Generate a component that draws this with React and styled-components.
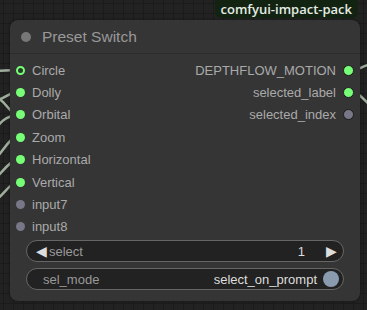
import React from 'react';
import styled, { createGlobalStyle } from 'styled-components';

const GlobalStyle = createGlobalStyle`
  html, body {
    margin: 0;
    padding: 0;
    background: #222;
  }
  body {
    font-family: "Liberation Sans", Arial, sans-serif;
  }
`;

const inputs = [
  { name: 'Circle', linked: true, ring: true },
  { name: 'Dolly', linked: true },
  { name: 'Orbital', linked: true },
  { name: 'Zoom', linked: true },
  { name: 'Horizontal', linked: true },
  { name: 'Vertical', linked: true },
  { name: 'input7', linked: false },
  { name: 'input8', linked: false },
];

const outputs = [
  { name: 'DEPTHFLOW_MOTION', linked: true },
  { name: 'selected_label', linked: true },
  { name: 'selected_index', linked: false },
];

const App = () => {
  return (
    <>
      <GlobalStyle />
      <Canvas>
        <Wires width="367" height="310" viewBox="0 0 367 310">
          <g fill="none" stroke="#9fae9c" strokeWidth="2.5" strokeLinecap="round">
            <path d="M-4 71 L16 70" />
            <path d="M-4 101 C4 98 8 94 16 92" />
            <path d="M-4 97 C4 100 8 110 16 115" />
            <path d="M-4 128 C4 118 8 117 16 115" />
            <path d="M-4 158 C4 150 8 140 16 137" />
            <path d="M-4 178 C4 170 8 163 16 160" />
            <path d="M-4 200 C4 194 8 186 16 182" />
            <path d="M354 70 C360 69 363 66 371 64" />
            <path d="M354 92 C360 94 364 100 371 106" />
          </g>
        </Wires>
        <Badge>comfyui-impact-pack</Badge>
        <Node>
          <Title>
            <TitleDot />
            <TitleText>Preset Switch</TitleText>
          </Title>
          <Body>
            <Slots>
              <SlotColumn>
                {inputs.map(input => (
                  <SlotRow key={input.name}>
                    <SlotDot $linked={input.linked} $ring={input.ring} />
                    <SlotLabel>{input.name}</SlotLabel>
                  </SlotRow>
                ))}
              </SlotColumn>
              <SlotColumn>
                {outputs.map(output => (
                  <SlotRow key={output.name} $right>
                    <SlotLabel>{output.name}</SlotLabel>
                    <SlotDot $linked={output.linked} $output />
                  </SlotRow>
                ))}
              </SlotColumn>
            </Slots>
            <Widget>
              <Arrow>◀</Arrow>
              <WidgetLabel>select</WidgetLabel>
              <WidgetValue>1</WidgetValue>
              <Arrow $right>▶</Arrow>
            </Widget>
            <Widget $toggle>
              <WidgetLabel>sel_mode</WidgetLabel>
              <WidgetValue>select_on_prompt</WidgetValue>
              <Knob />
            </Widget>
          </Body>
        </Node>
      </Canvas>
    </>
  );
};

const Canvas = styled.div`
  position: relative;
  width: 367px;
  height: 310px;
  overflow: hidden;
  background-color: #222;
  background-image: linear-gradient(#1b1b1b 1px, transparent 1px),
    linear-gradient(90deg, #1b1b1b 1px, transparent 1px);
  background-size: 10px 10px;
  background-position: 3px 3px;
  padding: 20px 7px 0 10px;
  box-sizing: border-box;
`;

const Wires = styled.svg`
  position: absolute;
  left: 0;
  top: 0;
`;

const Badge = styled.div`
  position: absolute;
  top: 0;
  right: 9px;
  height: 18px;
  padding: 0 6px;
  display: flex;
  align-items: center;
  background: #122312;
  border-radius: 0 0 6px 6px;
  color: #e4ece4;
  font-family: "Open Sans", "Noto Sans", sans-serif;
  font-size: 13px;
  font-weight: 600;
  line-height: 1;
`;

const Node = styled.div`
  position: relative;
  width: 350px;
  height: 281px;
  background: #353535;
  border-radius: 8px;
  box-shadow: 0 0 3px rgba(0, 0, 0, 0.5);
  display: flex;
  flex-direction: column;
`;

const Title = styled.div`
  height: 34px;
  display: flex;
  align-items: center;
  gap: 11px;
  padding: 1px 0 0 11px;
  border-bottom: 1px solid #2c2c2c;
  box-sizing: border-box;
`;

const TitleDot = styled.span`
  width: 10px;
  height: 10px;
  border-radius: 50%;
  background: #777;
`;

const TitleText = styled.span`
  color: #999;
  font-size: 15.5px;
`;

const Body = styled.div`
  padding: 5px 0 0;
  display: flex;
  flex-direction: column;
`;

const Slots = styled.div`
  display: flex;
  justify-content: space-between;
`;

const SlotColumn = styled.div`
  display: flex;
  flex-direction: column;
`;

const SlotRow = styled.div`
  height: 22.4px;
  display: flex;
  align-items: center;
  gap: 7px;
  padding: ${props => (props.$right ? '0 6px 0 0' : '0 0 0 6px')};
  justify-content: ${props => (props.$right ? 'flex-end' : 'flex-start')};
`;

const SlotDot = styled.span`
  width: 9px;
  height: 9px;
  border-radius: 50%;
  box-sizing: border-box;
  flex-shrink: 0;
  background: ${props => (props.$linked ? '#7f7' : '#778')};
  border: ${props =>
    props.$ring
      ? '2.5px solid #7f7'
      : props.$output
      ? '1px solid #1c1c1c'
      : 'none'};
  ${props => props.$ring && 'background: #2a3a2a;'}
  ${props => props.$output && 'width: 11px; height: 11px;'}
`;

const SlotLabel = styled.span`
  color: #aaa;
  font-size: 13px;
`;

const Widget = styled.div`
  margin: ${props => (props.$toggle ? '6px 16px 0 16px' : '2px 16px 0 16px')};
  height: 22px;
  box-sizing: border-box;
  border: 1px solid #666;
  border-radius: 11px;
  background: #222;
  display: flex;
  align-items: center;
  padding: ${props => (props.$toggle ? '0 4px 0 16px' : '0 6px 0 9px')};
  gap: ${props => (props.$toggle ? '4px' : '2px')};
  font-size: 13px;
`;

const Arrow = styled.span`
  color: #ddd;
  font-size: 14px;
  line-height: 1;
  margin-left: ${props => (props.$right ? '19px' : '0')};
`;

const WidgetLabel = styled.span`
  color: #999;
  flex: 1;
`;

const WidgetValue = styled.span`
  color: #ddd;
`;

const Knob = styled.span`
  width: 16px;
  height: 16px;
  border-radius: 50%;
  background: #8a9bb0;
  margin-left: 2px;
`;

export default App;
